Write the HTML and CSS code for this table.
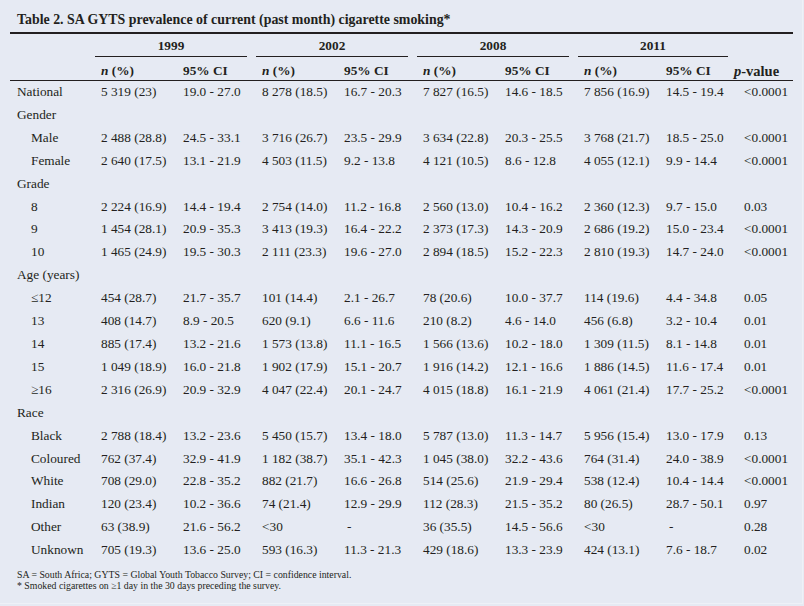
FILE: index.html
```html
<!DOCTYPE html>
<html lang="en">
<head>
<meta charset="utf-8">
<title>Table 2. SA GYTS prevalence</title>
<link rel="stylesheet" href="styles.css">
</head>
<body>
<div class="page">
  <h1 class="title">Table 2. SA GYTS prevalence of current (past month) cigarette smoking*</h1>
  <table class="data">
    <colgroup>
      <col class="c-label">
      <col class="c-n"><col class="c-ci">
      <col class="c-n"><col class="c-ci">
      <col class="c-n"><col class="c-ci">
      <col class="c-n"><col class="c-ci-last">
      <col class="c-p">
    </colgroup>
    <thead>
      <tr class="years">
        <th></th>
        <th colspan="2"><span class="yr">1999</span></th>
        <th colspan="2"><span class="yr">2002</span></th>
        <th colspan="2"><span class="yr">2008</span></th>
        <th colspan="2"><span class="yr yr-last">2011</span></th>
        <th></th>
      </tr>
      <tr class="sub">
        <th></th>
        <th><i>n</i> (%)</th><th>95% CI</th>
        <th><i>n</i> (%)</th><th>95% CI</th>
        <th><i>n</i> (%)</th><th>95% CI</th>
        <th><i>n</i> (%)</th><th>95% CI</th>
        <th class="p-head"><i>p</i>-value</th>
      </tr>
    </thead>
    <tbody>
      <tr><td class="lab">National</td><td>5 319 (23)</td><td>19.0 - 27.0</td><td>8 278 (18.5)</td><td>16.7 - 20.3</td><td>7 827 (16.5)</td><td>14.6 - 18.5</td><td>7 856 (16.9)</td><td>14.5 - 19.4</td><td class="p">&lt;0.0001</td></tr>
      <tr><td class="lab">Gender</td><td></td><td></td><td></td><td></td><td></td><td></td><td></td><td></td><td></td></tr>
      <tr><td class="lab ind">Male</td><td>2 488 (28.8)</td><td>24.5 - 33.1</td><td>3 716 (26.7)</td><td>23.5 - 29.9</td><td>3 634 (22.8)</td><td>20.3 - 25.5</td><td>3 768 (21.7)</td><td>18.5 - 25.0</td><td class="p">&lt;0.0001</td></tr>
      <tr><td class="lab ind">Female</td><td>2 640 (17.5)</td><td>13.1 - 21.9</td><td>4 503 (11.5)</td><td>9.2 - 13.8</td><td>4 121 (10.5)</td><td>8.6 - 12.8</td><td>4 055 (12.1)</td><td>9.9 - 14.4</td><td class="p">&lt;0.0001</td></tr>
      <tr><td class="lab">Grade</td><td></td><td></td><td></td><td></td><td></td><td></td><td></td><td></td><td></td></tr>
      <tr><td class="lab ind">8</td><td>2 224 (16.9)</td><td>14.4 - 19.4</td><td>2 754 (14.0)</td><td>11.2 - 16.8</td><td>2 560 (13.0)</td><td>10.4 - 16.2</td><td>2 360 (12.3)</td><td>9.7 - 15.0</td><td class="p">0.03</td></tr>
      <tr><td class="lab ind">9</td><td>1 454 (28.1)</td><td>20.9 - 35.3</td><td>3 413 (19.3)</td><td>16.4 - 22.2</td><td>2 373 (17.3)</td><td>14.3 - 20.9</td><td>2 686 (19.2)</td><td>15.0 - 23.4</td><td class="p">&lt;0.0001</td></tr>
      <tr><td class="lab ind">10</td><td>1 465 (24.9)</td><td>19.5 - 30.3</td><td>2 111 (23.3)</td><td>19.6 - 27.0</td><td>2 894 (18.5)</td><td>15.2 - 22.3</td><td>2 810 (19.3)</td><td>14.7 - 24.0</td><td class="p">&lt;0.0001</td></tr>
      <tr><td class="lab">Age (years)</td><td></td><td></td><td></td><td></td><td></td><td></td><td></td><td></td><td></td></tr>
      <tr><td class="lab ind">≤12</td><td>454 (28.7)</td><td>21.7 - 35.7</td><td>101 (14.4)</td><td>2.1 - 26.7</td><td>78 (20.6)</td><td>10.0 - 37.7</td><td>114 (19.6)</td><td>4.4 - 34.8</td><td class="p">0.05</td></tr>
      <tr><td class="lab ind">13</td><td>408 (14.7)</td><td>8.9 - 20.5</td><td>620 (9.1)</td><td>6.6 - 11.6</td><td>210 (8.2)</td><td>4.6 - 14.0</td><td>456 (6.8)</td><td>3.2 - 10.4</td><td class="p">0.01</td></tr>
      <tr><td class="lab ind">14</td><td>885 (17.4)</td><td>13.2 - 21.6</td><td>1 573 (13.8)</td><td>11.1 - 16.5</td><td>1 566 (13.6)</td><td>10.2 - 18.0</td><td>1 309 (11.5)</td><td>8.1 - 14.8</td><td class="p">0.01</td></tr>
      <tr><td class="lab ind">15</td><td>1 049 (18.9)</td><td>16.0 - 21.8</td><td>1 902 (17.9)</td><td>15.1 - 20.7</td><td>1 916 (14.2)</td><td>12.1 - 16.6</td><td>1 886 (14.5)</td><td>11.6 - 17.4</td><td class="p">0.01</td></tr>
      <tr><td class="lab ind">≥16</td><td>2 316 (26.9)</td><td>20.9 - 32.9</td><td>4 047 (22.4)</td><td>20.1 - 24.7</td><td>4 015 (18.8)</td><td>16.1 - 21.9</td><td>4 061 (21.4)</td><td>17.7 - 25.2</td><td class="p">&lt;0.0001</td></tr>
      <tr><td class="lab">Race</td><td></td><td></td><td></td><td></td><td></td><td></td><td></td><td></td><td></td></tr>
      <tr><td class="lab ind">Black</td><td>2 788 (18.4)</td><td>13.2 - 23.6</td><td>5 450 (15.7)</td><td>13.4 - 18.0</td><td>5 787 (13.0)</td><td>11.3 - 14.7</td><td>5 956 (15.4)</td><td>13.0 - 17.9</td><td class="p">0.13</td></tr>
      <tr><td class="lab ind">Coloured</td><td>762 (37.4)</td><td>32.9 - 41.9</td><td>1 182 (38.7)</td><td>35.1 - 42.3</td><td>1 045 (38.0)</td><td>32.2 - 43.6</td><td>764 (31.4)</td><td>24.0 - 38.9</td><td class="p">&lt;0.0001</td></tr>
      <tr><td class="lab ind">White</td><td>708 (29.0)</td><td>22.8 - 35.2</td><td>882 (21.7)</td><td>16.6 - 26.8</td><td>514 (25.6)</td><td>21.9 - 29.4</td><td>538 (12.4)</td><td>10.4 - 14.4</td><td class="p">&lt;0.0001</td></tr>
      <tr><td class="lab ind">Indian</td><td>120 (23.4)</td><td>10.2 - 36.6</td><td>74 (21.4)</td><td>12.9 - 29.9</td><td>112 (28.3)</td><td>21.5 - 35.2</td><td>80 (26.5)</td><td>28.7 - 50.1</td><td class="p">0.97</td></tr>
      <tr><td class="lab ind">Other</td><td>63 (38.9)</td><td>21.6 - 56.2</td><td>&lt;30</td><td class="dash">-</td><td>36 (35.5)</td><td>14.5 - 56.6</td><td>&lt;30</td><td class="dash">-</td><td class="p">0.28</td></tr>
      <tr><td class="lab ind">Unknown</td><td>705 (19.3)</td><td>13.6 - 25.0</td><td>593 (16.3)</td><td>11.3 - 21.3</td><td>429 (18.6)</td><td>13.3 - 23.9</td><td>424 (13.1)</td><td>7.6 - 18.7</td><td class="p">0.02</td></tr>
    </tbody>
  </table>
  <div class="notes">
    <p>SA = South Africa; GYTS = Global Youth Tobacco Survey; CI = confidence interval.</p>
    <p>* Smoked cigarettes on ≥1 day in the 30 days preceding the survey.</p>
  </div>
</div>
</body>
</html>
```
FILE: styles.css
```css
html, body {
  margin: 0;
  padding: 0;
  background: #e6eaf3;
}
body {
  font-family: "Liberation Serif", "Times New Roman", serif;
  color: #231f20;
}
.page {
  box-sizing: border-box;
  width: 803px;
  height: 604px;
  padding: 0 10px 0 10px;
  background: #e6eaf3;
  border-right: 1px solid #eef1f7;
  border-bottom: 1px solid #eef1f7;
  overflow: hidden;
}
.title {
  margin: 10px 0 0 7px;
  font-size: 13.9px;
  line-height: 20px;
  font-weight: bold;
}
.data {
  margin-top: 2px;
  width: 783px;
  table-layout: fixed;
  border-collapse: collapse;
  border-top: 2px solid #231f20;
  font-size: 13.3px;
}
.c-label { width: 85px; }
.c-n { width: 82px; }
.c-ci { width: 79px; }
.c-ci-last { width: 73px; }
.c-p { width: 60px; }

.data th, .data td {
  padding: 0 0 0 6px;
  text-align: left;
  white-space: nowrap;
  vertical-align: top;
}
.years th {
  padding: 2px 0 0 0;
  line-height: 20px;
  text-align: center;
  font-weight: bold;
}
.yr {
  display: block;
  margin-right: 9px;
  border-bottom: 1px solid #231f20;
}
.yr-last { margin-right: 5px; }
.sub th {
  padding-top: 5px;
  line-height: 18px;
  font-weight: bold;
  border-bottom: 1px solid #231f20;
}
.sub th.p-head {
  padding-left: 1px;
  font-size: 14.5px;
}
.data tbody td {
  line-height: 22.9px;
}
.data td.lab { padding-left: 7px; }
.data td.lab.ind { padding-left: 21px; }
.data td.dash { padding-left: 9px; }
.data td.p { padding-left: 11px; }
.notes {
  margin: 7px 0 0 7px;
  font-size: 9.8px;
  line-height: 11px;
}
.notes p { margin: 0; }
```
